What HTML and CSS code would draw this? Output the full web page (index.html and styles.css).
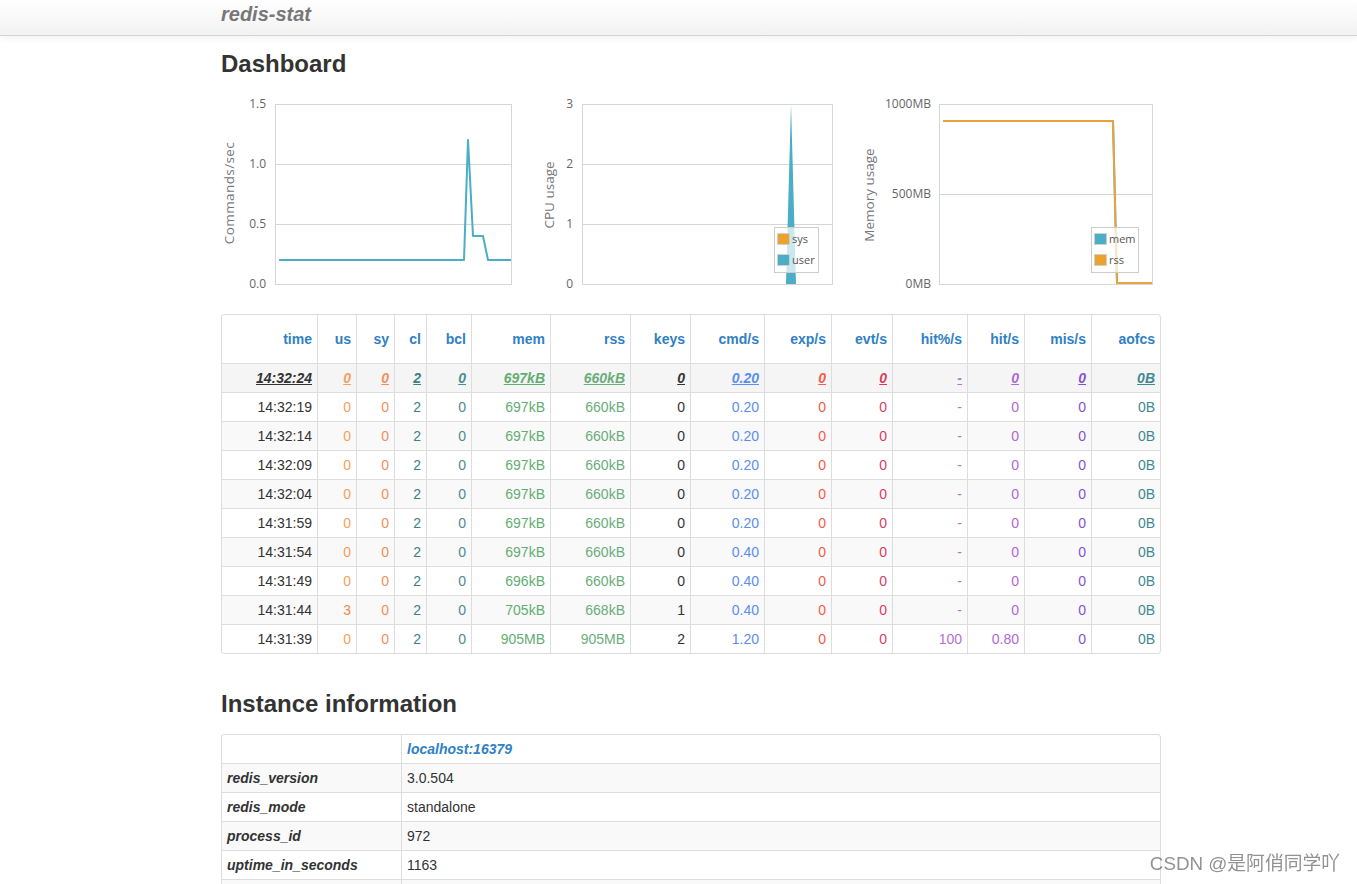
FILE: index.html
```html
<!DOCTYPE html>
<html>
<head>
<meta charset="utf-8">
<title>redis-stat</title>
<link rel="stylesheet" href="styles.css">
</head>
<body>
<div class="navbar">
  <div class="container"><span class="brand">redis-stat</span></div>
</div>
<div class="container">
  <h2 class="title-dash">Dashboard</h2>
  <div class="charts">
    <svg class="chart" width="300" height="200" viewBox="0 0 300 200">
      <g class="grid">
        <line x1="54" y1="9.5" x2="290" y2="9.5"/>
        <line x1="54" y1="69.5" x2="290" y2="69.5"/>
        <line x1="54" y1="129.5" x2="290" y2="129.5"/>
        <line x1="54" y1="189.5" x2="290" y2="189.5"/>
        <line x1="54.5" y1="9" x2="54.5" y2="190"/>
        <line x1="290.5" y1="9" x2="290.5" y2="190"/>
      </g>
      <g class="ticks">
        <text x="45" y="13">1.5</text>
        <text x="45" y="73">1.0</text>
        <text x="45" y="133">0.5</text>
        <text x="45" y="193">0.0</text>
      </g>
      <text class="ytitle ytitle-wide" transform="translate(8,98) rotate(-90)">Commands/sec</text>
      <polyline class="line-teal" points="58,165 243,165 247,45 252,141 262,141 267,165 290,165"/>
    </svg>
    <svg class="chart" width="300" height="200" viewBox="0 0 300 200">
      <g class="grid">
        <line x1="41" y1="9.5" x2="291" y2="9.5"/>
        <line x1="41" y1="69.5" x2="291" y2="69.5"/>
        <line x1="41" y1="129.5" x2="291" y2="129.5"/>
        <line x1="41" y1="189.5" x2="291" y2="189.5"/>
        <line x1="41.5" y1="9" x2="41.5" y2="190"/>
        <line x1="291.5" y1="9" x2="291.5" y2="190"/>
      </g>
      <g class="ticks">
        <text x="32" y="13">3</text>
        <text x="32" y="73">2</text>
        <text x="32" y="133">1</text>
        <text x="32" y="193">0</text>
      </g>
      <text class="ytitle" transform="translate(8,100) rotate(-90)">CPU usage</text>
      <polygon class="area-teal" points="245,189 250,9 255,189"/>
      <g class="legend">
        <rect class="legend-box" x="233.5" y="132.5" width="44" height="45"/>
        <rect class="sw-orange" x="236.5" y="138.5" width="12" height="11"/>
        <text x="251" y="148">sys</text>
        <rect class="sw-teal" x="236.5" y="159.5" width="12" height="11"/>
        <text x="251" y="169">user</text>
      </g>
    </svg>
    <svg class="chart" width="300" height="200" viewBox="0 0 300 200">
      <g class="grid">
        <line x1="78" y1="9.5" x2="291" y2="9.5"/>
        <line x1="78" y1="99.5" x2="291" y2="99.5"/>
        <line x1="78" y1="189.5" x2="291" y2="189.5"/>
        <line x1="78.5" y1="9" x2="78.5" y2="190"/>
        <line x1="291.5" y1="9" x2="291.5" y2="190"/>
      </g>
      <g class="ticks">
        <text x="70" y="13">1000MB</text>
        <text x="70" y="103">500MB</text>
        <text x="70" y="193">0MB</text>
      </g>
      <text class="ytitle" transform="translate(8,100) rotate(-90)">Memory usage</text>
      <polyline class="line-teal" points="82,26 252,26 256,188 291,188"/>
      <polyline class="line-orange" points="82,26 252,26 256,188 291,188"/>
      <g class="legend">
        <rect class="legend-box" x="230.5" y="132.5" width="47" height="45"/>
        <rect class="sw-teal" x="233.5" y="138.5" width="12" height="11"/>
        <text x="248" y="148">mem</text>
        <rect class="sw-orange" x="233.5" y="159.5" width="12" height="11"/>
        <text x="248" y="169">rss</text>
      </g>
    </svg>
  </div>

  <table class="table stats">
    <colgroup>
      <col style="width:96px"><col style="width:39px"><col style="width:38px"><col style="width:32px"><col style="width:45px"><col style="width:79px"><col style="width:80px"><col style="width:60px"><col style="width:74px"><col style="width:67px"><col style="width:61px"><col style="width:75px"><col style="width:57px"><col style="width:67px"><col style="width:69px">
    </colgroup>
    <thead>
      <tr><th>time</th><th>us</th><th>sy</th><th>cl</th><th>bcl</th><th>mem</th><th>rss</th><th>keys</th><th>cmd/s</th><th>exp/s</th><th>evt/s</th><th>hit%/s</th><th>hit/s</th><th>mis/s</th><th>aofcs</th></tr>
    </thead>
    <tbody>
      <tr class="latest"><td class="c-time">14:32:24</td><td class="c-us">0</td><td class="c-sy">0</td><td class="c-cl">2</td><td class="c-bcl">0</td><td class="c-mem">697kB</td><td class="c-rss">660kB</td><td class="c-keys">0</td><td class="c-cmd">0.20</td><td class="c-exp">0</td><td class="c-evt">0</td><td class="c-hitp">-</td><td class="c-hit">0</td><td class="c-mis">0</td><td class="c-aof">0B</td></tr>
      <tr><td class="c-time">14:32:19</td><td class="c-us">0</td><td class="c-sy">0</td><td class="c-cl">2</td><td class="c-bcl">0</td><td class="c-mem">697kB</td><td class="c-rss">660kB</td><td class="c-keys">0</td><td class="c-cmd">0.20</td><td class="c-exp">0</td><td class="c-evt">0</td><td class="c-hitp">-</td><td class="c-hit">0</td><td class="c-mis">0</td><td class="c-aof">0B</td></tr>
      <tr><td class="c-time">14:32:14</td><td class="c-us">0</td><td class="c-sy">0</td><td class="c-cl">2</td><td class="c-bcl">0</td><td class="c-mem">697kB</td><td class="c-rss">660kB</td><td class="c-keys">0</td><td class="c-cmd">0.20</td><td class="c-exp">0</td><td class="c-evt">0</td><td class="c-hitp">-</td><td class="c-hit">0</td><td class="c-mis">0</td><td class="c-aof">0B</td></tr>
      <tr><td class="c-time">14:32:09</td><td class="c-us">0</td><td class="c-sy">0</td><td class="c-cl">2</td><td class="c-bcl">0</td><td class="c-mem">697kB</td><td class="c-rss">660kB</td><td class="c-keys">0</td><td class="c-cmd">0.20</td><td class="c-exp">0</td><td class="c-evt">0</td><td class="c-hitp">-</td><td class="c-hit">0</td><td class="c-mis">0</td><td class="c-aof">0B</td></tr>
      <tr><td class="c-time">14:32:04</td><td class="c-us">0</td><td class="c-sy">0</td><td class="c-cl">2</td><td class="c-bcl">0</td><td class="c-mem">697kB</td><td class="c-rss">660kB</td><td class="c-keys">0</td><td class="c-cmd">0.20</td><td class="c-exp">0</td><td class="c-evt">0</td><td class="c-hitp">-</td><td class="c-hit">0</td><td class="c-mis">0</td><td class="c-aof">0B</td></tr>
      <tr><td class="c-time">14:31:59</td><td class="c-us">0</td><td class="c-sy">0</td><td class="c-cl">2</td><td class="c-bcl">0</td><td class="c-mem">697kB</td><td class="c-rss">660kB</td><td class="c-keys">0</td><td class="c-cmd">0.20</td><td class="c-exp">0</td><td class="c-evt">0</td><td class="c-hitp">-</td><td class="c-hit">0</td><td class="c-mis">0</td><td class="c-aof">0B</td></tr>
      <tr><td class="c-time">14:31:54</td><td class="c-us">0</td><td class="c-sy">0</td><td class="c-cl">2</td><td class="c-bcl">0</td><td class="c-mem">697kB</td><td class="c-rss">660kB</td><td class="c-keys">0</td><td class="c-cmd">0.40</td><td class="c-exp">0</td><td class="c-evt">0</td><td class="c-hitp">-</td><td class="c-hit">0</td><td class="c-mis">0</td><td class="c-aof">0B</td></tr>
      <tr><td class="c-time">14:31:49</td><td class="c-us">0</td><td class="c-sy">0</td><td class="c-cl">2</td><td class="c-bcl">0</td><td class="c-mem">696kB</td><td class="c-rss">660kB</td><td class="c-keys">0</td><td class="c-cmd">0.40</td><td class="c-exp">0</td><td class="c-evt">0</td><td class="c-hitp">-</td><td class="c-hit">0</td><td class="c-mis">0</td><td class="c-aof">0B</td></tr>
      <tr><td class="c-time">14:31:44</td><td class="c-us c-us-hi">3</td><td class="c-sy">0</td><td class="c-cl">2</td><td class="c-bcl">0</td><td class="c-mem">705kB</td><td class="c-rss">668kB</td><td class="c-keys">1</td><td class="c-cmd">0.40</td><td class="c-exp">0</td><td class="c-evt">0</td><td class="c-hitp">-</td><td class="c-hit">0</td><td class="c-mis">0</td><td class="c-aof">0B</td></tr>
      <tr><td class="c-time">14:31:39</td><td class="c-us">0</td><td class="c-sy">0</td><td class="c-cl">2</td><td class="c-bcl">0</td><td class="c-mem">905MB</td><td class="c-rss">905MB</td><td class="c-keys">2</td><td class="c-cmd">1.20</td><td class="c-exp">0</td><td class="c-evt">0</td><td class="c-hitp">100</td><td class="c-hit">0.80</td><td class="c-mis">0</td><td class="c-aof">0B</td></tr>
    </tbody>
  </table>

  <h2 class="title-info">Instance information</h2>
  <table class="table info">
    <colgroup><col style="width:180px"><col></colgroup>
    <thead>
      <tr><th></th><th class="host">localhost:16379</th></tr>
    </thead>
    <tbody>
      <tr><th>redis_version</th><td>3.0.504</td></tr>
      <tr><th>redis_mode</th><td>standalone</td></tr>
      <tr><th>process_id</th><td>972</td></tr>
      <tr><th>uptime_in_seconds</th><td>1163</td></tr>
      <tr><th></th><td></td></tr>
    </tbody>
  </table>
</div>
<div class="watermark">CSDN @是阿俏同学吖</div>
</body>
</html>
```

FILE: styles.css
```css
html, body {
  margin: 0;
  padding: 0;
  background: #fff;
  height: 884px;
  overflow: hidden;
}
body {
  font-family: "Liberation Sans", Arial, sans-serif;
  font-size: 14px;
  line-height: 20px;
  color: #333;
}
.container {
  width: 940px;
  margin-left: 221px;
}
.navbar {
  height: 35px;
  background: linear-gradient(#ffffff, #f2f2f2);
  border-bottom: 1px solid #d4d4d4;
  box-shadow: 0 1px 8px rgba(0, 0, 0, 0.07);
}
.brand {
  display: block;
  padding-top: 3px;
  font-size: 20px;
  line-height: 22px;
  font-weight: bold;
  font-style: italic;
  color: #777;
}
h2 {
  font-size: 24px;
  line-height: 30px;
  font-weight: bold;
  color: #333;
}
.title-dash {
  margin: 13px 0 16px;
}
.title-info {
  margin: 35px 0 15px;
}
.charts {
  display: flex;
  gap: 20px;
  height: 200px;
}
.chart {
  display: block;
  font-family: "Open Sans", "Noto Sans", sans-serif;
}
.grid line {
  stroke: #d6d6d6;
  stroke-width: 1;
}
.ticks text {
  font-size: 12px;
  fill: #666;
  text-anchor: end;
}
.ytitle {
  font-size: 13.5px;
  fill: #777;
  text-anchor: middle;
  dominant-baseline: central;
}
.ytitle-wide {
  letter-spacing: 0.4px;
}
.line-teal {
  fill: none;
  stroke: #4aaec4;
  stroke-width: 2;
  stroke-linejoin: round;
}
.line-orange {
  fill: none;
  stroke: #e9a33a;
  stroke-width: 2;
  stroke-linejoin: round;
}
.area-teal {
  fill: #4aaec4;
}
.legend-box {
  fill: rgba(255, 255, 255, 0.72);
  stroke: #cccccc;
  stroke-width: 1;
}
.sw-orange {
  fill: #eba32f;
  stroke: #d0d0d0;
  stroke-width: 1;
}
.sw-teal {
  fill: #4aaec4;
  stroke: #d0d0d0;
  stroke-width: 1;
}
.legend text {
  font-size: 11px;
  fill: #555;
}

.table {
  width: 940px;
  table-layout: fixed;
  border-collapse: separate;
  border-spacing: 0;
  border: 1px solid #dddddd;
  border-left: 0;
  border-radius: 4px;
}
.table th, .table td {
  border-left: 1px solid #dddddd;
  border-top: 1px solid #dddddd;
  padding: 4px 5px;
  height: 20px;
  line-height: 20px;
  white-space: nowrap;
  overflow: hidden;
}
.table thead tr:first-child th {
  border-top: 0;
}
.stats {
  margin-top: 19px;
}
.stats th, .stats td {
  text-align: right;
}
.stats thead th {
  padding-top: 14px;
  padding-bottom: 14px;
  color: #2f80c4;
  font-weight: bold;
}
.table tbody tr:nth-child(odd) > td,
.table tbody tr:nth-child(odd) > th {
  background: #f9f9f9;
}
.stats tbody tr.latest > td {
  background: #f5f5f5;
  font-weight: bold;
  font-style: italic;
  text-decoration: underline;
}
.c-time { color: #333; }
.c-us { color: #f5a05c; }
.c-us-hi { color: #f08a46; }
.c-sy { color: #f58e5c; }
.c-cl { color: #3d7f86; }
.c-bcl { color: #4a8d90; }
.c-mem { color: #62ad72; }
.c-rss { color: #6aad7c; }
.c-keys { color: #333; }
.c-cmd { color: #5a8ef0; }
.c-exp { color: #f25c48; }
.c-evt { color: #d93d5c; }
.c-hitp { color: #b470d4; }
.c-hit { color: #b068d6; }
.c-mis { color: #8652d4; }
.c-aof { color: #3f8a8f; }

.info th {
  text-align: left;
  font-weight: bold;
  font-style: italic;
  color: #333;
}
.info td {
  text-align: left;
}
.info th.host {
  color: #2f80c4;
}
.watermark {
  position: fixed;
  right: 17px;
  bottom: 10px;
  font-family: "Liberation Sans", "Noto Sans CJK SC", sans-serif;
  font-size: 18.8px;
  line-height: 20px;
  color: rgba(110, 110, 110, 0.75);
}
```
